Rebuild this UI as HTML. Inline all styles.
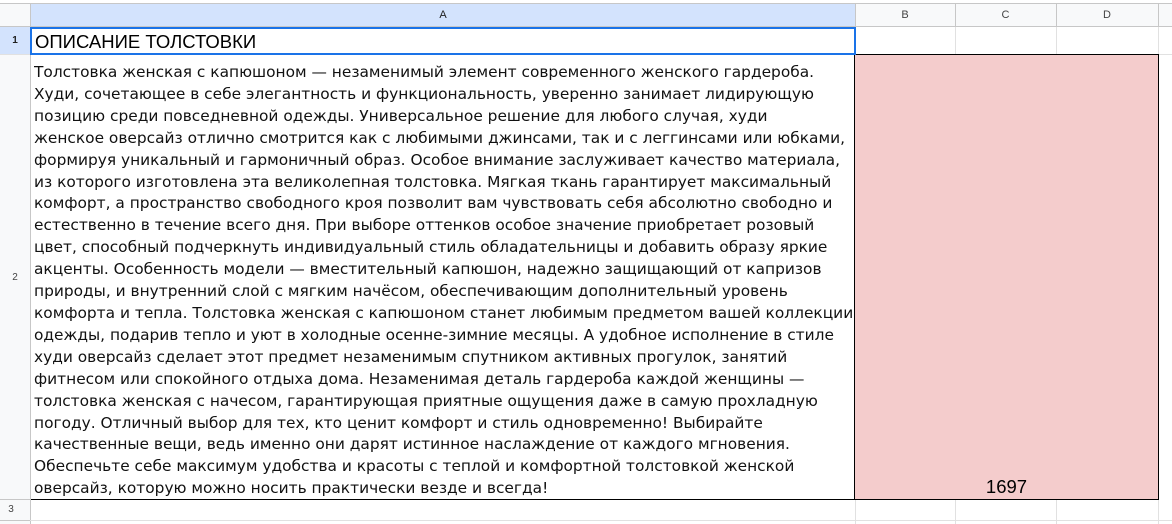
<!DOCTYPE html>
<html><head><meta charset="utf-8"><style>
body{margin:0;width:1172px;height:524px;background:#fff;position:relative;overflow:hidden;font-family:"Liberation Sans",Arial,sans-serif}
.a{position:absolute}
.t{position:absolute;left:34px;top:61px;width:819px;overflow:hidden;line-height:21.9px;color:#111;white-space:nowrap;font-family:"DejaVu Sans","Liberation Sans",sans-serif;font-size:15.4px}
</style></head><body>
<div class="a" style="left:0;top:3px;width:1172px;height:24px;background:#f8f9fa;border-top:1px solid #c7c7c7;border-bottom:1px solid #c7c7c7;box-sizing:border-box"></div>
<div class="a" style="left:31px;top:4px;width:824px;height:22px;background:#d3e3fd"></div>
<div class="a" style="left:0;top:27px;width:30px;height:27px;background:#d3e3fd"></div>
<div class="a" style="left:0;top:54px;width:30px;height:470px;background:#f8f9fa"></div>
<div class="a" style="left:30px;top:3px;width:1px;height:521px;background:#c7c7c7"></div>
<div class="a" style="left:855px;top:3px;width:1px;height:24px;background:#c7c7c7"></div>
<div class="a" style="left:955px;top:3px;width:1px;height:24px;background:#c7c7c7"></div>
<div class="a" style="left:1056px;top:3px;width:1px;height:24px;background:#c7c7c7"></div>
<div class="a" style="left:1158px;top:3px;width:1px;height:24px;background:#c7c7c7"></div>
<div class="a" style="left:955px;top:27px;width:1px;height:27px;background:#e1e1e1"></div>
<div class="a" style="left:1056px;top:27px;width:1px;height:27px;background:#e1e1e1"></div>
<div class="a" style="left:1158px;top:27px;width:1px;height:497px;background:#e1e1e1"></div>
<div class="a" style="left:955px;top:499px;width:1px;height:25px;background:#e1e1e1"></div>
<div class="a" style="left:1056px;top:499px;width:1px;height:25px;background:#e1e1e1"></div>
<div class="a" style="left:855px;top:499px;width:1px;height:25px;background:#e1e1e1"></div>
<div class="a" style="left:0;top:54px;width:1172px;height:1px;background:#e1e1e1"></div>
<div class="a" style="left:0;top:520px;width:1172px;height:1px;background:#e1e1e1"></div>
<div class="a" style="left:0;top:499px;width:30px;height:1px;background:#c7c7c7"></div>
<div class="a" style="left:0;top:520px;width:30px;height:1px;background:#c7c7c7"></div>
<div class="a" style="left:31px;top:4px;width:824px;height:22px;line-height:22px;text-align:center;font-size:11px;color:#1f1f1f">A</div>
<div class="a" style="left:855px;top:4px;width:100px;height:22px;line-height:22px;text-align:center;font-size:11px;color:#444">B</div>
<div class="a" style="left:955px;top:4px;width:101px;height:22px;line-height:22px;text-align:center;font-size:11px;color:#444">C</div>
<div class="a" style="left:1056px;top:4px;width:102px;height:22px;line-height:22px;text-align:center;font-size:11px;color:#444">D</div>
<div class="a" style="left:0;top:27px;width:30px;height:27px;line-height:27px;text-align:center;font-size:10px;color:#1f1f1f;font-weight:bold">1</div>
<div class="a" style="left:0;top:264px;width:30px;height:27px;line-height:27px;text-align:center;font-size:10px;color:#444">2</div>
<div class="a" style="left:0;top:499px;width:22px;height:21px;line-height:21px;text-align:center;font-size:10px;color:#444">3</div>
<div class="a" style="left:854px;top:54px;width:305px;height:446px;background:#f4cccc;border:1px solid #000;box-sizing:border-box"></div>
<div class="a" style="left:854px;top:475px;width:305px;line-height:24px;text-align:center;font-size:18.5px;color:#000">1697</div>
<div class="a" style="left:31px;top:499px;width:824px;height:1px;background:#000"></div>
<div class="a" style="left:30px;top:27px;width:826px;height:28px;border:2px solid #1a73e8;box-sizing:border-box"></div>
<div class="a" style="left:35px;top:30px;line-height:23px;font-size:18.5px;color:#000">ОПИСАНИЕ ТОЛСТОВКИ</div>
<div class="t" style="top:62px">Толстовка женская с капюшоном — незаменимый элемент современного женского гардероба.<br>Худи, сочетающее в себе элегантность и функциональность, уверенно занимает лидирующую<br>позицию среди повседневной одежды. Универсальное решение для любого случая, худи<br>женское оверсайз отлично смотрится как с любимыми джинсами, так и с леггинсами или юбками,<br>формируя уникальный и гармоничный образ. Особое внимание заслуживает качество материала,<br>из которого изготовлена эта великолепная толстовка. Мягкая ткань гарантирует максимальный<br>комфорт, а пространство свободного кроя позволит вам чувствовать себя абсолютно свободно и<br>естественно в течение всего дня. При выборе оттенков особое значение приобретает розовый<br>цвет, способный подчеркнуть индивидуальный стиль обладательницы и добавить образу яркие<br>акценты. Особенность модели — вместительный капюшон, надежно защищающий от капризов<br>природы, и внутренний слой с мягким начёсом, обеспечивающим дополнительный уровень<br>комфорта и тепла. Толстовка женская с капюшоном станет любимым предметом вашей коллекции<br>одежды, подарив тепло и уют в холодные осенне-зимние месяцы. А удобное исполнение в стиле<br>худи оверсайз сделает этот предмет незаменимым спутником активных прогулок, занятий<br>фитнесом или спокойного отдыха дома. Незаменимая деталь гардероба каждой женщины —<br>толстовка женская с начесом, гарантирующая приятные ощущения даже в самую прохладную<br>погоду. Отличный выбор для тех, кто ценит комфорт и стиль одновременно! Выбирайте<br>качественные вещи, ведь именно они дарят истинное наслаждение от каждого мгновения.<br>Обеспечьте себе максимум удобства и красоты с теплой и комфортной толстовкой женской<br>оверсайз, которую можно носить практически везде и всегда!</div>
</body></html>
